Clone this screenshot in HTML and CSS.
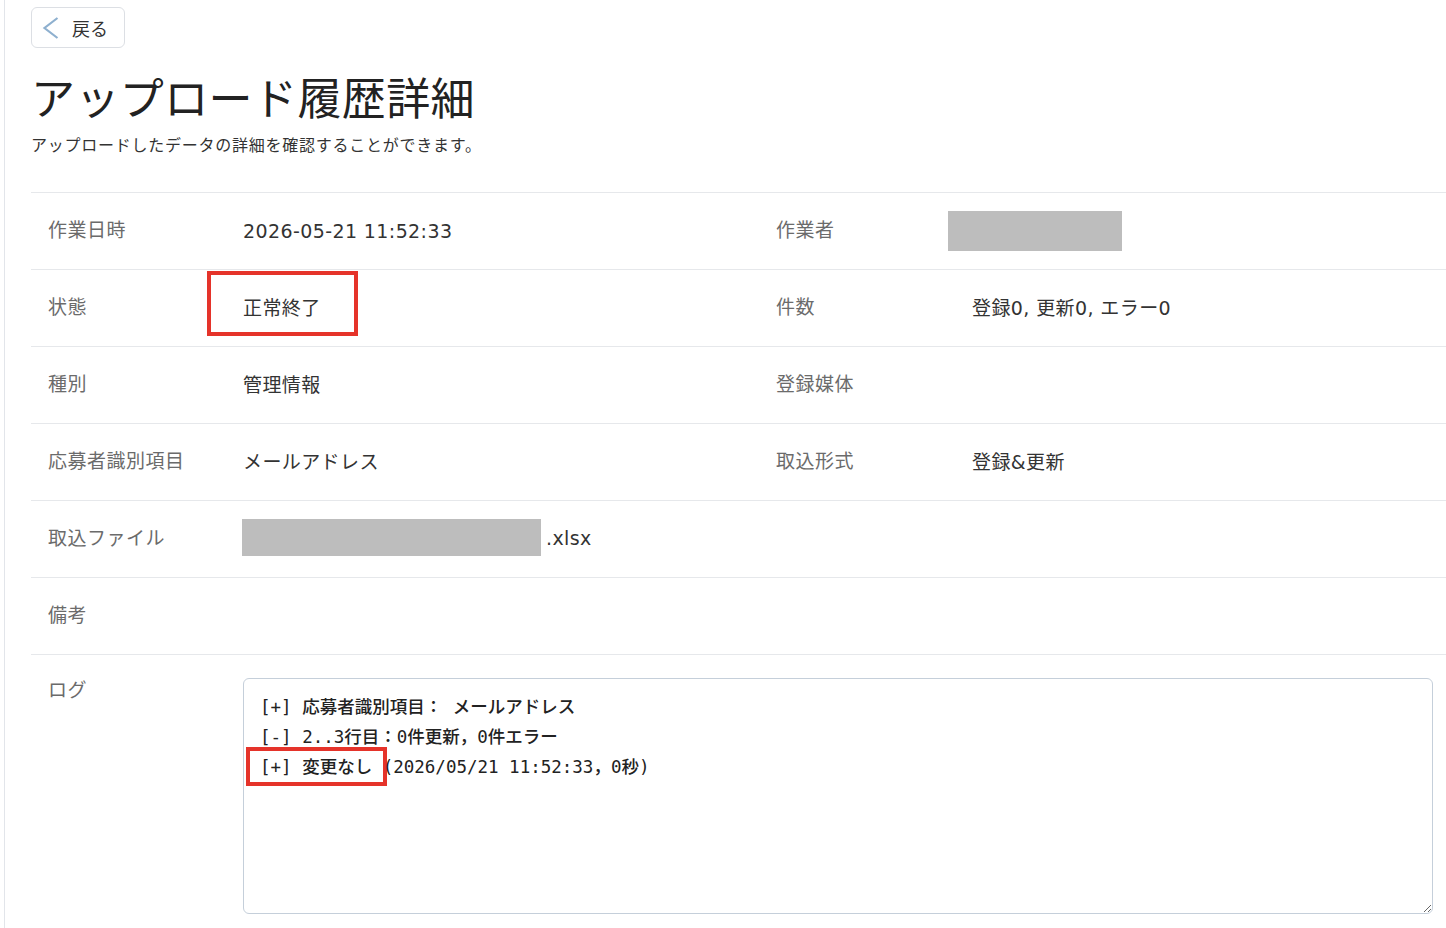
FILE: index.html
```html
<!DOCTYPE html>
<html lang="ja">
<head>
    <meta charset="UTF-8">
    <meta name="viewport" content="width=device-width, initial-scale=1.0">
    <title>アップロード履歴詳細</title>
    <link rel="stylesheet" href="styles.css">
</head>
<body>
    <div class="page">
        <a class="back-btn" href="#">
            <svg class="back-icon" width="17" height="22" viewBox="0 0 17 22">
                <path d="M15.5 1 L2.5 11 L15.5 21" fill="none" stroke="#8eb0cf" stroke-width="2.2"/>
            </svg>
            <span>戻る</span>
        </a>

        <h1 class="title">アップロード履歴詳細</h1>
        <p class="lead">アップロードしたデータの詳細を確認することができます。</p>

        <table class="detail">
            <colgroup>
                <col class="c-label">
                <col class="c-value">
                <col class="c-label2">
                <col>
            </colgroup>
            <tbody>
                <tr>
                    <th>作業日時</th>
                    <td>2026-05-21 11:52:33</td>
                    <th>作業者</th>
                    <td><span class="redact redact-user"></span></td>
                </tr>
                <tr>
                    <th>状態</th>
                    <td><span class="mark mark-status">正常終了</span></td>
                    <th>件数</th>
                    <td>登録0, 更新0, エラー0</td>
                </tr>
                <tr>
                    <th>種別</th>
                    <td>管理情報</td>
                    <th>登録媒体</th>
                    <td></td>
                </tr>
                <tr>
                    <th>応募者識別項目</th>
                    <td>メールアドレス</td>
                    <th>取込形式</th>
                    <td>登録&amp;更新</td>
                </tr>
                <tr>
                    <th>取込ファイル</th>
                    <td colspan="3"><span class="redact redact-file"></span>.xlsx</td>
                </tr>
                <tr>
                    <th>備考</th>
                    <td colspan="3"></td>
                </tr>
                <tr class="log-row">
                    <th>ログ</th>
                    <td colspan="3">
                        <div class="log"><span class="log-line">[+] 応募者識別項目： メールアドレス</span><span class="log-line">[-] 2..3行目：0件更新，0件エラー</span><span class="log-line"><span class="mark mark-log">[+] 変更なし</span> (2026/05/21 11:52:33，0秒)</span></div>
                    </td>
                </tr>
            </tbody>
        </table>
    </div>
</body>
</html>
```
FILE: styles.css
```css
        html, body {
            margin: 0;
            background: #ffffff;
        }

        body {
            font-family: "Liberation Sans", "Noto Sans CJK JP", sans-serif;
            color: #333333;
            overflow: hidden;
        }

        .page {
            margin-left: 4px;
            border-left: 1px solid #e2e5ea;
            padding: 7px 0 0 26px;
            min-height: 100vh;
            box-sizing: border-box;
        }

        .back-btn {
            display: inline-flex;
            align-items: center;
            gap: 13px;
            height: 41px;
            width: 94px;
            box-sizing: border-box;
            padding: 0 0 0 10px;
            border: 1px solid #dcdfe4;
            border-radius: 6px;
            color: #333333;
            text-decoration: none;
            font-size: 18px;
        }

        .back-icon {
            display: block;
        }

        .title {
            margin: 25px 0 7px;
            font-size: 44px;
            line-height: 54px;
            font-weight: normal;
            color: #222222;
            letter-spacing: 0.4px;
        }

        .lead {
            margin: 0 0 34px;
            font-size: 16px;
            line-height: 24px;
            color: #333333;
            letter-spacing: 0.75px;
        }

        .detail {
            width: 100%;
            border-collapse: collapse;
            table-layout: fixed;
        }

        .c-label { width: 195px; }
        .c-value { width: 533px; }
        .c-label2 { width: 196px; }

        .detail th,
        .detail td {
            height: 76px;
            padding: 0 13px 0 17px;
            border-top: 1px solid #e6e8eb;
            text-align: left;
            vertical-align: middle;
            font-size: 19px;
            line-height: 28px;
        }

        .detail th {
            font-weight: normal;
            color: #6b6b6b;
            letter-spacing: 0.5px;
        }

        .detail td {
            font-family: "DejaVu Sans", "Noto Sans CJK JP", sans-serif;
            color: #333333;
            letter-spacing: 0.4px;
        }

        .redact {
            display: inline-block;
            vertical-align: middle;
            background: #bdbdbd;
        }

        .redact-user {
            width: 174px;
            height: 40px;
            margin-left: -24px;
        }

        .redact-file {
            width: 299px;
            height: 37px;
            margin: -3px 5px 0 -1px;
        }

        .mark {
            display: inline-block;
            outline: 4px solid #e5332a;
        }

        .mark-status {
            padding: 19px 33px 10px 32px;
            margin: -19px -33px -10px -32px;
        }

        .log-row th,
        .log-row td {
            vertical-align: top;
            height: auto;
        }

        .log-row th {
            padding-top: 22px;
        }

        .log-row td {
            padding-top: 23px;
            padding-bottom: 13px;
        }

        .log {
            height: 236px;
            box-sizing: border-box;
            padding: 13px 16px;
            border: 1px solid #c5cfda;
            border-radius: 6px;
            font-family: "DejaVu Sans Mono", "Noto Sans CJK JP", monospace;
            font-size: 17.5px;
            font-weight: 500;
            line-height: 30px;
            color: #222222;
            letter-spacing: 0;
            overflow: auto;
            resize: both;
        }

        .log-line {
            display: block;
            white-space: pre;
        }

        .mark-log {
            padding: 1px 11px 0 10px;
            margin: -1px -11px 0 -10px;
            line-height: 30px;
        }
```
